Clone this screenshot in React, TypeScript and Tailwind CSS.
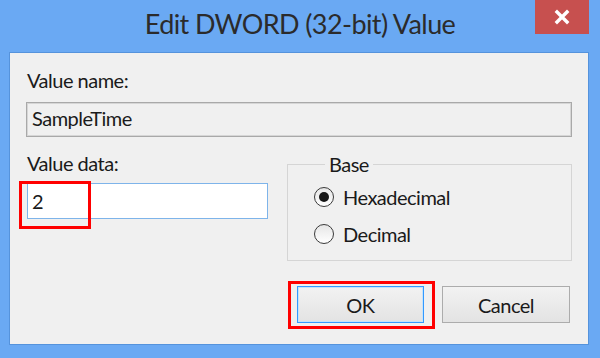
import { useState } from 'react';

const FONT = 'font-["Lato","Liberation_Sans",sans-serif]';
const TEXT = 'text-[20px] leading-[24px] tracking-[-0.5px] text-[#1a1a1a]';

function Radio({ checked, label, onSelect }: { checked: boolean; label: string; onSelect: () => void }) {
  return (
    <label onClick={onSelect} className="flex items-center h-[24px] cursor-default">
      <span className="w-[20px] h-[20px] rounded-full border border-[#3a3a3a] bg-gradient-to-b from-[#e6e6e6] to-white flex items-center justify-center shrink-0">
        {checked && <span className="w-[10px] h-[10px] rounded-full bg-[#151515]" />}
      </span>
      <span className={`ml-[9px] ${TEXT}`}>{label}</span>
    </label>
  );
}

export default function App() {
  const [base, setBase] = useState<'hex' | 'dec'>('hex');
  const [data, setData] = useState('2');

  return (
    <div className={`relative w-[600px] h-[358px] bg-[#6aa9f3] flex flex-col overflow-hidden ${FONT}`}>
      {/* Title bar */}
      <div className="h-[52px] flex justify-center pt-[7px] shrink-0">
        <h1 className="text-[27px] leading-[34px] tracking-[-0.6px] text-[#2b2b2b]">Edit DWORD (32-bit) Value</h1>
      </div>
      <button className="absolute top-0 left-[535px] w-[54px] h-[34px] bg-[#c7504f] flex items-center justify-center">
        <svg width="16" height="16" viewBox="0 0 16 16">
          <path d="M3 3 L13 13 M13 3 L3 13" stroke="#fff" strokeWidth="3.4" strokeLinecap="square" />
        </svg>
      </button>

      {/* Dialog body */}
      <div className="ml-[9px] mr-[11px] h-[293px] bg-[#f0f0f0] border border-[#5593dc] px-[16px] pt-[15px] flex flex-col">
        <div className={`ml-[1px] ${TEXT}`}>Value name:</div>
        <div className={`mt-[10px] h-[35px] border border-[#a9a9a9] shadow-[inset_0_0_0_1px_#d6d6d6] bg-[#f0f0f0] pl-[5px] pt-[3px] ${TEXT}`}>
          SampleTime
        </div>

        <div className="mt-[14px] flex">
          <div className="ml-[1px] w-[241px] flex flex-col">
            <div className={TEXT}>Value data:</div>
            <input
              value={data}
              onChange={(e) => setData(e.target.value)}
              className={`mt-[8px] h-[36px] w-full border border-[#7eb4ea] bg-white pl-[4px] outline-none ${TEXT}`}
            />
          </div>
          <fieldset className="ml-auto mt-[1px] w-[285px] border border-[#d5d5d5] pl-[26px] pt-[9px] pb-[14px] flex flex-col gap-[13px]">
            <legend className={`ml-[11px] px-[4px] ${TEXT}`}>Base</legend>
            <Radio checked={base === 'hex'} label="Hexadecimal" onSelect={() => setBase('hex')} />
            <Radio checked={base === 'dec'} label="Decimal" onSelect={() => setBase('dec')} />
          </fieldset>
        </div>

        <div className="mt-[25px] flex justify-end gap-[18px] pr-[2px]">
          <button className={`w-[127px] h-[37px] border border-[#3399ff] shadow-[inset_0_0_0_1px_#c5e3fb] bg-gradient-to-b from-[#f2f2f2] to-[#e3e3e3] flex items-center justify-center ${TEXT}`}>
            OK
          </button>
          <button className={`w-[128px] h-[37px] border border-[#acacac] bg-gradient-to-b from-[#f2f2f2] to-[#e3e3e3] flex items-center justify-center ${TEXT}`}>
            Cancel
          </button>
        </div>
      </div>

      {/* Annotation boxes */}
      <div className="absolute left-[19px] top-[181px] w-[72px] h-[48px] border-[3px] border-[#ff0000] pointer-events-none" />
      <div className="absolute left-[288px] top-[281px] w-[147px] h-[48px] border-[3px] border-[#ff0000] pointer-events-none" />
    </div>
  );
}
